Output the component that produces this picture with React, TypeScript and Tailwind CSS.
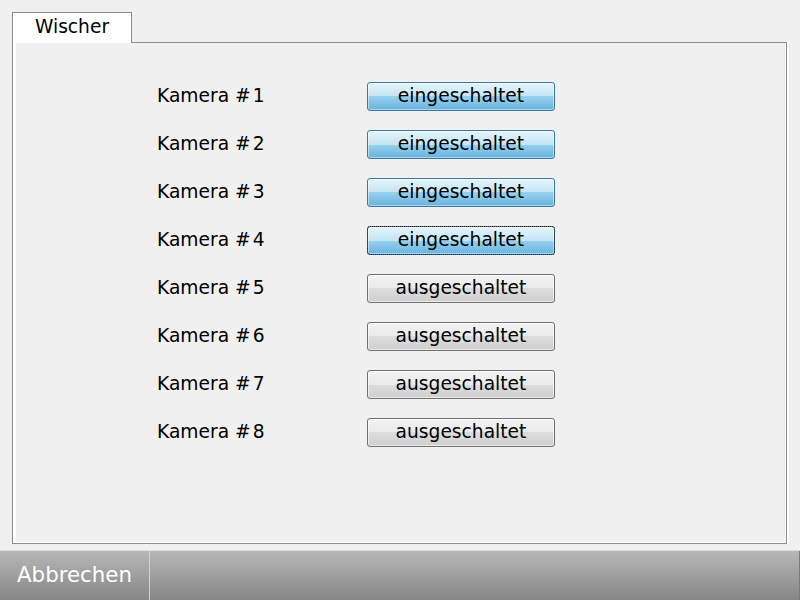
import React from "react";

const cams = [
  { n: 1, on: true },
  { n: 2, on: true },
  { n: 3, on: true },
  { n: 4, on: true, focus: true },
  { n: 5, on: false },
  { n: 6, on: false },
  { n: 7, on: false },
  { n: 8, on: false },
];

export default function App() {
  return (
    <div
      className="w-[800px] h-[600px] bg-[#f0f0f0] flex flex-col overflow-hidden text-black"
      style={{ fontFamily: '"DejaVu Sans", Verdana, sans-serif' }}
    >
      <div className="flex-1 flex flex-col pl-[12px] pr-[13px] pt-[12px] pb-[6px]">
        <div className="flex">
          <div className="relative z-10 -mb-px w-[120px] h-[31px] bg-white border border-b-0 border-[#8c8c8c] flex items-center justify-center text-[18.67px] leading-none pb-[1px]">
            Wischer
          </div>
        </div>
        <div className="flex-1 flex border border-[#8c8c8c] shadow-[2px_0_0_#ffffff]">
          <div className="flex-1 flex bg-white pl-[3px] pr-[1px] pb-[1px]">
            <div className="flex-1 bg-[#f0f0f0] pt-[39px] pl-[141px]">
              <div className="grid grid-cols-[210px_188px] auto-rows-[29px] gap-y-[19px] text-[18.67px]">
                {cams.map((c) => (
                  <React.Fragment key={c.n}>
                    <div className="flex items-center leading-none pb-[1px]">
                      Kamera #<span className="ml-[2px]">{c.n}</span>
                    </div>
                    <div
                      className={
                        (c.on
                          ? "flex items-center justify-center rounded-[3px] border border-[#3a78a8] bg-[linear-gradient(to_bottom,#e5f4fc_0%,#c4e5f6_50%,#98d1ef_50%,#68b3db_100%)] shadow-[inset_0_0_0_1px_rgba(255,255,255,0.45)] leading-none pb-[1px]"
                          : "flex items-center justify-center rounded-[3px] border border-[#707070] bg-[linear-gradient(to_bottom,#f2f2f2_0%,#ebebeb_50%,#dddddd_50%,#cfcfcf_100%)] shadow-[inset_0_0_0_1px_rgba(255,255,255,0.6)] leading-none pb-[1px]") +
                        (c.focus ? " outline-1 outline-dotted outline-[#1a1a1a] -outline-offset-1" : "")
                      }
                    >
                      {c.on ? "eingeschaltet" : "ausgeschaltet"}
                    </div>
                  </React.Fragment>
                ))}
              </div>
            </div>
          </div>
        </div>
      </div>
      <div className="h-[50px] flex bg-[linear-gradient(to_bottom,#b7b7b7,#868686)] border-t border-[#dcdcdc]">
        <div className="w-[149px] flex items-center pl-[17px] text-white text-[21.33px] leading-none pb-[2px]">
          Abbrechen
        </div>
        <div className="w-px bg-[#d4d4d4]" />
        <div className="flex-1 border-r border-[#7a7a7a]" />
      </div>
    </div>
  );
}
